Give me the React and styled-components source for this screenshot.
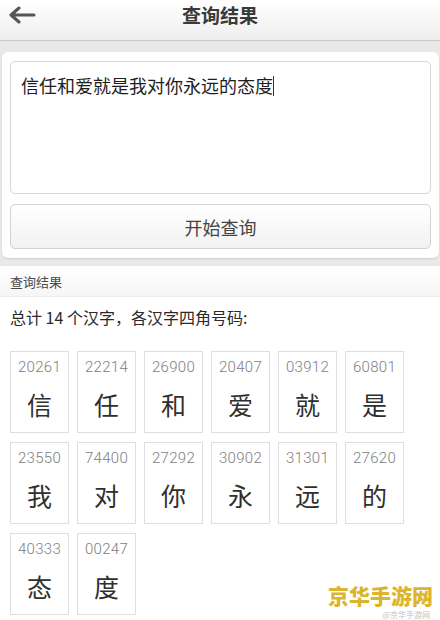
import React from "react";
import styled, { createGlobalStyle } from "styled-components";

const GlobalStyle = createGlobalStyle`
  html, body {
    margin: 0;
    padding: 0;
    background: #ffffff;
    font-family: "Noto Sans CJK SC", "Noto Sans", sans-serif;
  }
`;

const Page = styled.div`
  position: relative;
  width: 440px;
  height: 620px;
  overflow: hidden;
  background: #ffffff;
`;

const Header = styled.div`
  height: 40px;
  display: flex;
  align-items: center;
  justify-content: center;
  position: relative;
  background: linear-gradient(#ffffff, #eeeeee);
  border-bottom: 1px solid #c9c9c9;
`;

const BackButton = styled.div`
  position: absolute;
  left: 8px;
  top: 3px;
  width: 30px;
  height: 24px;
  display: flex;
  align-items: center;
`;

const Title = styled.div`
  font-size: 19px;
  font-weight: 700;
  color: #3a3a3a;
  margin-top: -12px;
`;

const TopArea = styled.div`
  background: #e9e9e9;
  padding: 11px 1px 8px 2px;
`;

const Card = styled.div`
  background: #ffffff;
  border-radius: 6px;
  padding: 9px 8px 9px 8px;
  display: flex;
  flex-direction: column;
  gap: 10px;
  box-shadow: 0 1px 2px rgba(0, 0, 0, 0.12);
`;

const InputBox = styled.div`
  border: 1px solid #d6d6d6;
  border-radius: 5px;
  padding: 12px 10px;
  font-size: 18px;
  line-height: 22px;
  color: #1e1e1e;
  box-sizing: border-box;
  height: 133px;
`;

const Caret = styled.span`
  display: inline-block;
  width: 1px;
  height: 20px;
  background: #333;
  vertical-align: -3px;
`;

const QueryButton = styled.div`
  height: 45px;
  border: 1px solid #d2d2d2;
  border-radius: 5px;
  background: linear-gradient(#ffffff, #f2f2f2);
  display: flex;
  align-items: center;
  justify-content: center;
  font-size: 18px;
  color: #444;
  box-sizing: border-box;
`;

const SectionLabel = styled.div`
  height: 30px;
  display: flex;
  align-items: center;
  padding-left: 10px;
  font-size: 13px;
  color: #4a4a4a;
  background: linear-gradient(#ffffff, #f6f6f6);
  border-bottom: 1px solid #ececec;
`;

const Summary = styled.div`
  padding: 9px 10px 0 10px;
  font-size: 16px;
  color: #2a2a2a;
  height: 42px;
  line-height: 22px;
  box-sizing: border-box;
`;

const Grid = styled.div`
  display: grid;
  grid-template-columns: repeat(6, 59px);
  grid-auto-rows: 82px;
  column-gap: 8px;
  row-gap: 9px;
  padding: 12px 0 0 10px;
`;

const Cell = styled.div`
  border: 1px solid #dedede;
  box-sizing: border-box;
  display: flex;
  flex-direction: column;
  align-items: center;
`;

const Code = styled.div`
  font-family: "Roboto", "Noto Sans", sans-serif;
  font-weight: 300;
  font-size: 15px;
  color: #7e7e7e;
  margin-top: 6px;
  letter-spacing: 0.3px;
`;

const Hanzi = styled.div`
  font-size: 25px;
  color: #2f2f2f;
  margin-top: 10px;
`;

const WatermarkBox = styled.div`
  position: absolute;
  right: 7px;
  bottom: 0;
  display: flex;
  flex-direction: column;
  align-items: flex-end;
  gap: 3px;
`;

const Watermark = styled.div`
  font-size: 21px;
  line-height: 24px;
  font-weight: 900;
  color: #dcb52c;
`;

const WatermarkSub = styled.div`
  margin-right: 3px;
  font-size: 8px;
  line-height: 10px;
  color: rgba(160, 160, 160, 0.7);
`;

const items = [
  ["20261", "信"], ["22214", "任"], ["26900", "和"], ["20407", "爱"],
  ["03912", "就"], ["60801", "是"], ["23550", "我"], ["74400", "对"],
  ["27292", "你"], ["30902", "永"], ["31301", "远"], ["27620", "的"],
  ["40333", "态"], ["00247", "度"],
];

function App() {
  return (
    <Page>
      <GlobalStyle />
      <Header>
        <BackButton>
          <svg width="28" height="18" viewBox="0 0 28 18">
            <path d="M26 9 H4 M11 2 L3 9 L11 16" stroke="#555" strokeWidth="3" fill="none" strokeLinecap="round" strokeLinejoin="round" />
          </svg>
        </BackButton>
        <Title>查询结果</Title>
      </Header>
      <TopArea>
        <Card>
          <InputBox>
            信任和爱就是我对你永远的态度<Caret />
          </InputBox>
          <QueryButton>开始查询</QueryButton>
        </Card>
      </TopArea>
      <SectionLabel>查询结果</SectionLabel>
      <Summary>总计 14 个汉字，各汉字四角号码:</Summary>
      <Grid>
        {items.map(([code, ch]) => (
          <Cell key={code + ch}>
            <Code>{code}</Code>
            <Hanzi>{ch}</Hanzi>
          </Cell>
        ))}
      </Grid>
      <WatermarkBox>
        <Watermark>京华手游网</Watermark>
        <WatermarkSub>@京华手游网</WatermarkSub>
      </WatermarkBox>
    </Page>
  );
}

export default App;
